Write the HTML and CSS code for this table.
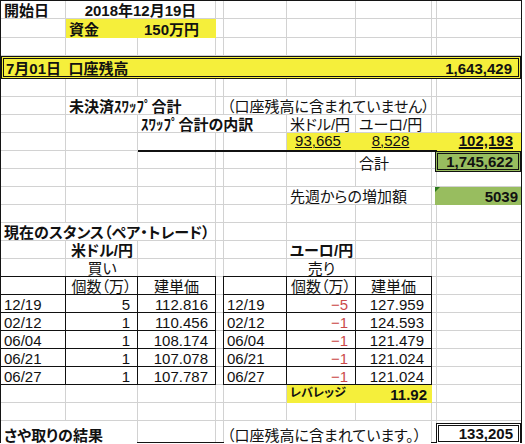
FILE: index.html
```html
<!DOCTYPE html>
<html lang="ja">
<head>
<meta charset="utf-8">
<title>口座残高</title>
<link rel="stylesheet" href="styles.css">
</head>
<body>
<div class="sheet">
  <div class="row">
    <div class="cell b from-a">開始日</div>
    <div class="cell b ov ctr from-b to-c">2018年12月19日</div>
  </div>
  <div class="row h19">
    <div class="cell b yel from-b">資金</div>
    <div class="cell b yel rt fund from-c">150万円</div>
  </div>
  <div class="row"></div>
  <div class="row h23">
    <div class="balance">
      <span>7月01日&ensp;口座残高</span>
      <span>1,643,429</span>
    </div>
  </div>
  <div class="row"></div>
  <div class="row">
    <div class="cell b ov from-b to-c">未決済ｽﾜｯﾌﾟ合計</div>
    <div class="cell ov from-e to-g">（口座残高に含まれていません）</div>
  </div>
  <div class="row">
    <div class="cell b ov from-c to-e">ｽﾜｯﾌﾟ合計の内訳</div>
    <div class="cell from-f">米ドル/円</div>
    <div class="cell from-g">ユーロ/円</div>
  </div>
  <div class="row">
    <div class="cell rule from-c to-e"></div>
    <div class="cell yel rule ctr sub from-f"><span class="ul">93,665</span></div>
    <div class="cell yel rule ctr sub from-g"><span class="ul">8,528</span></div>
    <div class="cell yel rule from-h"></div>
    <div class="cell yel b rt total from-i"><span class="ul thick">102,193</span></div>
  </div>
  <div class="row">
    <div class="cell from-g">合計</div>
    <div class="cell b rt boxed grn from-h to-i">1,745,622</div>
  </div>
  <div class="row"></div>
  <div class="row">
    <div class="cell ov from-f to-g">先週からの増加額</div>
    <div class="cell b rt grn flagged from-h to-i">5039</div>
  </div>
  <div class="row"></div>
  <div class="row">
    <div class="cell b ov from-a to-c">現在のスタンス（ペア・トレード）</div>
  </div>
  <div class="row">
    <div class="cell b ctr from-b">米ドル/円</div>
    <div class="cell b ctr from-f">ユーロ/円</div>
  </div>
  <div class="row">
    <div class="cell ctr from-b">買い</div>
    <div class="cell ctr from-f">売り</div>
  </div>

  <div class="row">
    <div class="cell tc head from-a"></div>
    <div class="cell tc head ctr">個数（万）</div>
    <div class="cell tc head ctr">建単価</div>
    <div class="cell tc head lead from-e"></div>
    <div class="cell tc head ctr">個数（万）</div>
    <div class="cell tc head ctr">建単価</div>
  </div>
  <div class="row">
    <div class="cell tc from-a">12/19</div>
    <div class="cell tc num">5</div>
    <div class="cell tc num">112.816</div>
    <div class="cell tc lead from-e">12/19</div>
    <div class="cell tc num neg">−5</div>
    <div class="cell tc num">127.959</div>
  </div>
  <div class="row">
    <div class="cell tc from-a">02/12</div>
    <div class="cell tc num">1</div>
    <div class="cell tc num">110.456</div>
    <div class="cell tc lead from-e">02/12</div>
    <div class="cell tc num neg">−1</div>
    <div class="cell tc num">124.593</div>
  </div>
  <div class="row">
    <div class="cell tc from-a">06/04</div>
    <div class="cell tc num">1</div>
    <div class="cell tc num">108.174</div>
    <div class="cell tc lead from-e">06/04</div>
    <div class="cell tc num neg">−1</div>
    <div class="cell tc num">121.479</div>
  </div>
  <div class="row">
    <div class="cell tc from-a">06/21</div>
    <div class="cell tc num">1</div>
    <div class="cell tc num">107.078</div>
    <div class="cell tc lead from-e">06/21</div>
    <div class="cell tc num neg">−1</div>
    <div class="cell tc num">121.024</div>
  </div>
  <div class="row">
    <div class="cell tc from-a">06/27</div>
    <div class="cell tc num">1</div>
    <div class="cell tc num">107.787</div>
    <div class="cell tc lead from-e">06/27</div>
    <div class="cell tc num neg">−1</div>
    <div class="cell tc num">121.024</div>
  </div>

  <div class="row">
    <div class="cell b yel small from-f">レバレッジ</div>
    <div class="cell b yel rt lev from-g">11.92</div>
  </div>
  <div class="row"></div>
  <div class="row h21">
    <div class="cell b ov from-a to-b">さや取りの結果</div>
    <div class="cell ov from-e to-g">（口座残高に含まれています。）</div>
    <div class="cell b rt boxed result from-h to-i">133,205</div>
  </div>
</div>
</body>
</html>
```

FILE: styles.css
```css
* { box-sizing: border-box; margin: 0; padding: 0; }

html, body { background: #fff; }

body {
  font-family: "Liberation Sans", "Noto Sans CJK JP", sans-serif;
  color: #111;
  font-feature-settings: "palt" 1;
}

.sheet {
  width: 522px;
  height: 443px;
  border: 1px solid #141414;
  display: flex;
  flex-direction: column;
  background:
    linear-gradient(#d2d2d2, #d2d2d2) 64px 0 / 1px 100% no-repeat,
    linear-gradient(#d2d2d2, #d2d2d2) 136px 0 / 1px 100% no-repeat,
    linear-gradient(#d2d2d2, #d2d2d2) 214px 0 / 1px 100% no-repeat,
    linear-gradient(#d2d2d2, #d2d2d2) 222px 0 / 1px 100% no-repeat,
    linear-gradient(#d2d2d2, #d2d2d2) 285px 0 / 1px 100% no-repeat,
    linear-gradient(#d2d2d2, #d2d2d2) 354px 0 / 1px 100% no-repeat,
    linear-gradient(#d2d2d2, #d2d2d2) 430px 0 / 1px 100% no-repeat,
    linear-gradient(#d2d2d2, #d2d2d2) 435px 0 / 1px 100% no-repeat,
    linear-gradient(#d2d2d2, #d2d2d2) 0 17px / 100% 1px no-repeat,
    linear-gradient(#d2d2d2, #d2d2d2) 0 36px / 100% 1px no-repeat,
    linear-gradient(#d2d2d2, #d2d2d2) 0 54px / 100% 1px no-repeat,
    linear-gradient(#d2d2d2, #d2d2d2) 0 77px / 100% 1px no-repeat,
    repeating-linear-gradient(to bottom, transparent 0 17px, #d2d2d2 17px 18px) 0 78px / 100% 342px no-repeat,
    #fff;
}

.row {
  flex: none;
  display: grid;
  grid-template-columns: 65px 72px 78px 8px 63px 69px 76px 5px 84px;
  height: 18px;
}
.row.h19 { height: 19px; }
.row.h21 { height: 21px; }
.row.h23 { height: 23px; }

.cell {
  position: relative;
  display: flex;
  align-items: flex-end;
  padding: 0 3px 1px;
  font-size: 15px;
  line-height: 1;
  white-space: nowrap;
  min-width: 0;
}

/* column placement */
.from-a { grid-column-start: 1; }
.from-b { grid-column-start: 2; }
.from-c { grid-column-start: 3; }
.from-e { grid-column-start: 5; }
.from-f { grid-column-start: 6; }
.from-g { grid-column-start: 7; }
.from-h { grid-column-start: 8; }
.from-i { grid-column-start: 9; }
.to-b { grid-column-end: 3; }
.to-c { grid-column-end: 4; }
.to-e { grid-column-end: 6; }
.to-g { grid-column-end: 8; }
.to-i { grid-column-end: 10; }

.b { font-weight: 700; }
.ctr { justify-content: center; }
.rt { justify-content: flex-end; }

/* text overflowing into neighbouring cells hides the grid lines it crosses */
.ov { background: #fff; margin: 0 1px 1px 0; padding-bottom: 0; }

.yel { background: #f5ef3b; }
.grn { background: #98bd5f; }

.fund { padding-right: 17px; }

.balance {
  grid-column: 1 / 10;
  display: flex;
  justify-content: space-between;
  align-items: flex-end;
  border: 3px double #111;
  background: #f5ef3b;
  padding: 0 6px 0 2px;
  font-size: 15px;
  font-weight: 700;
  line-height: 1;
  white-space: nowrap;
}

/* swap breakdown row */
.rule { border-bottom: 2px solid #111; padding-bottom: 2px; }
.sub { padding-right: 10px; }
.total { padding-right: 8px; padding-bottom: 4px; }
.ul { text-decoration: underline; text-decoration-thickness: 1px; text-underline-offset: 1px; }
.ul.thick { text-decoration-thickness: 2px; }

.boxed {
  border: 3px double #111;
  margin-left: 3px;
  padding-right: 5px;
  padding-bottom: 0;
}

.flagged { margin-left: 3px; padding-right: 3px; }
.flagged::before {
  content: "";
  position: absolute;
  left: 0;
  top: 0;
  border-top: 5px solid #2b7a1c;
  border-right: 5px solid transparent;
}

/* position tables */
.tc {
  border-right: 1px solid #111;
  border-bottom: 1px solid #111;
  padding-bottom: 0;
}
.tc.head { box-shadow: 0 -1px 0 #111; }
.tc.lead { box-shadow: -1px 0 0 #111; }
.tc.head.lead { box-shadow: 0 -1px 0 #111, -1px 0 0 #111, -1px -1px 0 #111; }
.num { justify-content: flex-end; padding-right: 7px; }
.neg { color: #cc4b4b; }

.small { font-size: 12px; padding-bottom: 4px; }
.lev { padding-right: 5px; }

.result {
  background: #fff;
  margin-left: 4px;
  margin-top: 2px;
  padding-right: 5px;
}
```
